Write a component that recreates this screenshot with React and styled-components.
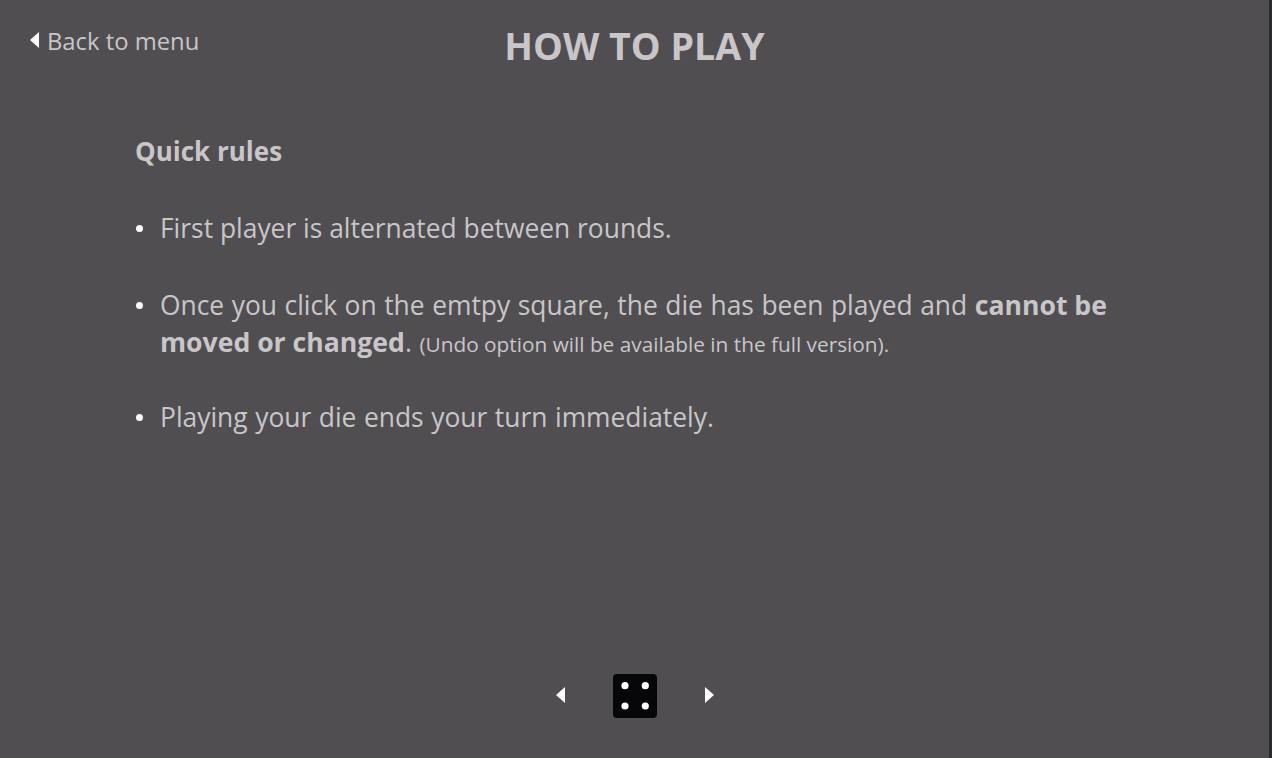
import styled, { createGlobalStyle } from "styled-components";

const GlobalStyle = createGlobalStyle`
  html, body {
    margin: 0;
    padding: 0;
    background: #2b2a2c;
  }
  * {
    box-sizing: border-box;
  }
`;

const App = () => {
  return (
    <Page>
      <GlobalStyle />
      <Header>
        <BackLink>
          <Arrow $dir="left" />
          Back to menu
        </BackLink>
        <Title>HOW TO PLAY</Title>
      </Header>
      <Content>
        <Heading>Quick rules</Heading>
        <RuleList>
          <Rule>First player is alternated between rounds.</Rule>
          <Rule $wide>
            Once you click on the emtpy square, the die has been played and{" "}
            <Strong>cannot be moved or changed</Strong>.{" "}
            <Note>(Undo option will be available in the full version).</Note>
          </Rule>
          <Rule $wide>Playing your die ends your turn immediately.</Rule>
        </RuleList>
      </Content>
      <Pager>
        <Arrow $dir="left" />
        <Die viewBox="0 0 44 44" aria-label="Page 4">
          <rect width="44" height="44" rx="4" fill="#060507" />
          <circle cx="12" cy="11.7" r="3.6" fill="#fff" />
          <circle cx="32.3" cy="11.7" r="3.6" fill="#fff" />
          <circle cx="12" cy="32" r="3.6" fill="#fff" />
          <circle cx="32.3" cy="32" r="3.6" fill="#fff" />
        </Die>
        <Arrow $dir="right" />
      </Pager>
    </Page>
  );
};

const Page = styled.div`
  width: 1269px;
  height: 758px;
  background: #504e51;
  color: #c8c6c9;
  font-family: "Open Sans", "Noto Sans", sans-serif;
  display: flex;
  flex-direction: column;
  overflow: hidden;
`;
const Header = styled.header`
  display: grid;
  grid-template-columns: 1fr auto 1fr;
  align-items: start;
  padding: 22px 30px 0;
  height: 133px;
`;
const BackLink = styled.a`
  display: flex;
  align-items: center;
  gap: 8px;
  font-size: 23.8px;
  line-height: 38px;
  cursor: pointer;
`;
const Title = styled.h1`
  margin: 0;
  font-size: 37.6px;
  line-height: 48px;
  font-weight: 700;
`;
const Content = styled.main`
  flex: 1;
  padding: 0 150px 0 135px;
`;
const Heading = styled.h2`
  margin: 0 0 41px;
  font-size: 26px;
  line-height: 36px;
  font-weight: 700;
`;
const RuleList = styled.ul`
  margin: 0;
  padding: 0 0 0 25px;
  list-style: none;
  display: flex;
  flex-direction: column;
  gap: 40px;
`;
const Rule = styled.li`
  position: relative;
  font-size: 26.4px;
  line-height: 37px;
  word-spacing: ${({ $wide }) => ($wide ? "0.7px" : "0")};
  &:last-child {
    margin-top: -4px;
  }
  &::before {
    content: "";
    position: absolute;
    left: -24px;
    top: 15px;
    width: 7px;
    height: 7px;
    border-radius: 50%;
    background: #fff;
  }
`;
const Strong = styled.strong`
  font-weight: 700;
  font-size: 26.6px;
  word-spacing: 0;
`;
const Note = styled.span`
  font-size: 20.8px;
  word-spacing: 0;
`;
const Pager = styled.nav`
  display: flex;
  align-items: center;
  justify-content: center;
  gap: 48px;
  height: 44px;
  margin-bottom: 40px;
`;
const Die = styled.svg`
  width: 44px;
  height: 44px;
  display: block;
`;
const Arrow = styled.span`
  display: inline-block;
  width: 0;
  height: 0;
  margin-bottom: 2px;
  border-top: 8.5px solid transparent;
  border-bottom: 8.5px solid transparent;
  border-left: ${({ $dir }) => ($dir === "right" ? "9px solid #fff" : "none")};
  border-right: ${({ $dir }) => ($dir === "left" ? "9px solid #fff" : "none")};
`;

export default App;
